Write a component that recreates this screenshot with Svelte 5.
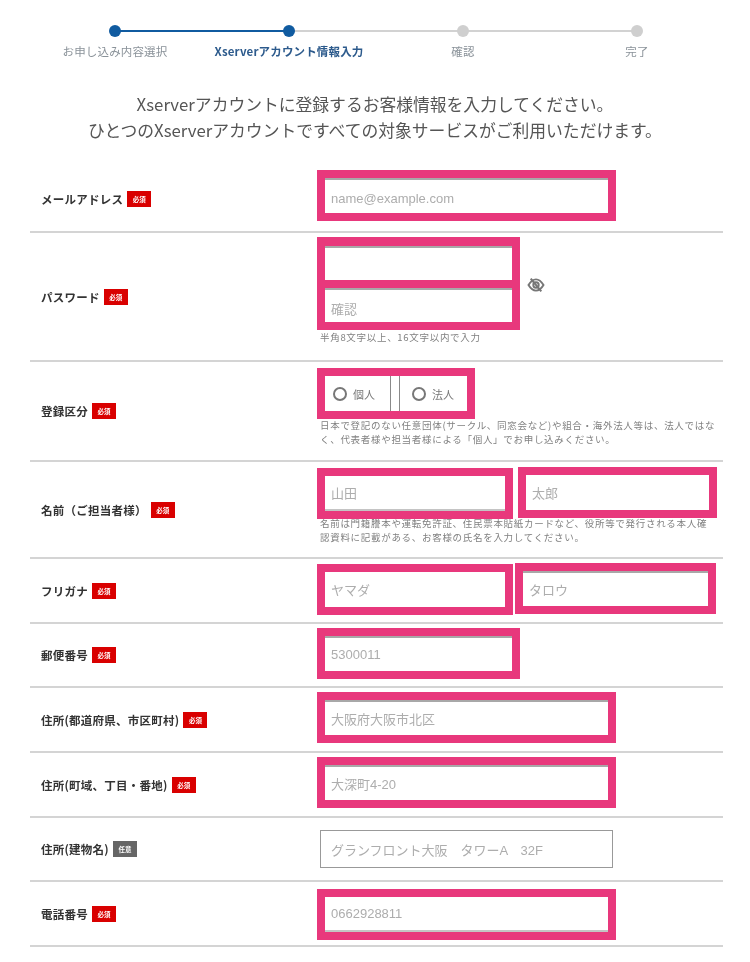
<script>
  const steps = [
    { label: 'お申し込み内容選択', state: 'done' },
    { label: 'Xserverアカウント情報入力', state: 'current' },
    { label: '確認', state: 'todo' },
    { label: '完了', state: 'todo' }
  ];
</script>

<main class="page">
  <ol class="steps">
    {#each steps as s}
      <li class="step {s.state}"><span class="dot"></span><span class="step-label">{s.label}</span></li>
    {/each}
  </ol>

  <div class="lead">
    <p>Xserverアカウントに登録するお客様情報を入力してください。</p>
    <p>ひとつのXserverアカウントですべての対象サービスがご利用いただけます。</p>
  </div>

  <form class="form">
    <div class="row r1">
      <div class="label">メールアドレス<span class="badge">必須</span></div>
      <div class="field">
        <div class="mark w299"><div class="input line">name@example.com</div></div>
      </div>
    </div>

    <div class="row r2">
      <div class="label">パスワード<span class="badge">必須</span></div>
      <div class="field">
        <div class="pw">
          <div class="pw-stack">
            <div class="mark stack-a w203"><div class="input line"></div></div>
            <div class="mark stack-b w203"><div class="input line">確認</div></div>
          </div>
          <svg class="eye" viewBox="0 0 24 24" width="18" height="18" aria-hidden="true">
            <path d="M2 12c3-5 6.200-7.500 10-7.500S19 7 22 12c-3 5-6.200 7.500-10 7.500S5 17 2 12z" fill="none" stroke="#777" stroke-width="2.600"/>
            <circle cx="12" cy="12" r="3.600" fill="none" stroke="#777" stroke-width="2.600"/>
            <path d="M5 3.500 19 20.500" stroke="#777" stroke-width="2.800"/>
          </svg>
        </div>
        <p class="hint one">半角8文字以上、16文字以内で入力</p>
      </div>
    </div>

    <div class="row r3">
      <div class="label">登録区分<span class="badge">必須</span></div>
      <div class="field">
        <div class="mark w158 radios">
          <span class="radio"><i></i>個人</span>
          <span class="radio second"><i></i>法人</span>
        </div>
        <p class="hint two">日本で登記のない任意団体(サークル、同窓会など)や組合・海外法人等は、法人ではなく、代表者様や担当者様による「個人」でお申し込みください。</p>
      </div>
    </div>

    <div class="row r4">
      <div class="label">名前（ご担当者様）<span class="badge">必須</span></div>
      <div class="field">
        <div class="pair">
          <div class="mark w196"><div class="input bottom">山田</div></div>
          <div class="mark w199 up"><div class="input">太郎</div></div>
        </div>
        <p class="hint two tight">名前は門籍謄本や運転免許証、住民票本貼紙カードなど、役所等で発行される本人確認資料に記載がある、お客様の氏名を入力してください。</p>
      </div>
    </div>

    <div class="row r5">
      <div class="label">フリガナ<span class="badge">必須</span></div>
      <div class="field">
        <div class="pair near">
          <div class="mark w196"><div class="input">ヤマダ</div></div>
          <div class="mark w201 up"><div class="input line">タロウ</div></div>
        </div>
      </div>
    </div>

    <div class="row r6">
      <div class="label">郵便番号<span class="badge">必須</span></div>
      <div class="field"><div class="mark w203"><div class="input line">5300011</div></div></div>
    </div>

    <div class="row r7">
      <div class="label">住所(都道府県、市区町村)<span class="badge">必須</span></div>
      <div class="field"><div class="mark w299"><div class="input line">大阪府大阪市北区</div></div></div>
    </div>

    <div class="row r8">
      <div class="label">住所(町域、丁目・番地)<span class="badge">必須</span></div>
      <div class="field"><div class="mark w299"><div class="input line">大深町4-20</div></div></div>
    </div>

    <div class="row r9">
      <div class="label">住所(建物名)<span class="badge optional">任意</span></div>
      <div class="field"><div class="plain">グランフロント大阪　タワーA　32F</div></div>
    </div>

    <div class="row r10">
      <div class="label">電話番号<span class="badge">必須</span></div>
      <div class="field"><div class="mark w299"><div class="input bottom">0662928811</div></div></div>
    </div>
  </form>
</main>

<style>
  :global(body) {
    margin: 0;
    background: #fff;
  }
  .page {
    width: 750px;
    height: 962px;
    overflow: hidden;
    font-family: "Noto Sans CJK JP", "Noto Sans", sans-serif;
    color: #444;
    filter: blur(0.35px);
  }
  .steps {
    list-style: none;
    margin: 0;
    padding: 25px 0 0 28px;
    display: grid;
    grid-template-columns: repeat(4, 174px);
  }
  .step {
    position: relative;
    display: flex;
    flex-direction: column;
    align-items: center;
    gap: 7px;
  }
  .dot {
    position: relative;
    z-index: 1;
    width: 12px;
    height: 12px;
    border-radius: 50%;
    background: #cfcfcf;
  }
  .step::after {
    content: "";
    position: absolute;
    left: 50%;
    top: 5px;
    width: 174px;
    height: 2px;
    background: #d2d2d2;
  }
  .step:last-child::after {
    display: none;
  }
  .step.done::after {
    background: #105ba0;
  }
  .done .dot,
  .current .dot {
    background: #105ba0;
  }
  .step-label {
    font-size: 11.500px;
    letter-spacing: 0.150px;
    line-height: 14px;
    white-space: nowrap;
    color: #8a9299;
  }
  .current .step-label {
    font-weight: 700;
    color: #2c5a8c;
  }
  .lead {
    margin-top: 33px;
    text-align: center;
    font-size: 16.800px;
    color: #555;
  }
  .lead p {
    margin: 0;
    line-height: 26px;
    white-space: nowrap;
  }
  .form {
    margin: 23px 27px 0 30px;
  }
  .row {
    display: grid;
    grid-template-columns: 287px 1fr;
    align-items: center;
    border-bottom: 2px solid #d4d4d4;
    box-sizing: border-box;
  }
  .field {
    align-self: start;
    margin-top: 4px;
  }
  .r1 { height: 67px; }
  .r2 { height: 129px; }
  .r3 { height: 100px; }
  .r4 { height: 97px; }
  .r5 { height: 65px; }
  .r6 { height: 64px; }
  .r7 { height: 65px; }
  .r8 { height: 65px; }
  .r9 { height: 64px; }
  .r10 { height: 65px; }
  .r3 .field,
  .r4 .field { margin-top: 6px; }
  .r5 .field { margin-top: 5px; }
  .r9 .field { margin-top: 12px; }
  .r10 .field { margin-top: 7px; }
  .r1 .input,
  .r2 .input { padding-top: 4px; }
  .label {
    padding-left: 11px;
    font-size: 11.500px;
    font-weight: 700;
    letter-spacing: 0.250px;
    color: #333;
    white-space: nowrap;
    display: flex;
    align-items: center;
  }
  .badge {
    margin-left: 4px;
    width: 24px;
    height: 16px;
    display: inline-flex;
    align-items: center;
    justify-content: center;
    background: #d90000;
    color: #fff;
    font-size: 6.500px;
    font-weight: 700;
    letter-spacing: 0;
  }
  .badge.optional {
    background: #666;
  }
  .mark {
    box-sizing: border-box;
    height: 51px;
    border: 8px solid #e8387c;
    background: #fff;
  }
  .w158 { width: 158px; }
  .w196 { width: 196px; }
  .w199 { width: 199px; }
  .w201 { width: 201px; }
  .w203 { width: 203px; }
  .w299 { width: 299px; }
  .input {
    box-sizing: border-box;
    height: 100%;
    display: flex;
    align-items: center;
    padding-left: 6px;
    font-family: "Liberation Sans", "Noto Sans CJK JP", sans-serif;
    font-size: 13px;
    color: #adadad;
    white-space: nowrap;
  }
  .line {
    border-top: 2px solid #a8a8a8;
  }
  .bottom {
    border-bottom: 2px solid #c4c4c4;
  }
  .pw {
    display: flex;
    align-items: flex-start;
  }
  .stack-a {
    height: 51px;
    border-top-width: 9px;
  }
  .stack-b {
    height: 50px;
    margin-top: -8px;
  }
  .eye {
    margin: 39px 0 0 7px;
  }
  .hint {
    margin: 0;
    padding-left: 3px;
    font-size: 9.500px;
    line-height: 13.500px;
    letter-spacing: 0.700px;
    color: #808080;
  }
  .hint.one {
    margin-top: 1px;
  }
  .hint.two {
    width: 396px;
    margin-top: 0;
  }
  .hint.two.tight {
    margin-top: -2px;
  }
  .radios {
    display: flex;
  }
  .radio {
    display: flex;
    align-items: center;
    gap: 6px;
    font-size: 11px;
    color: #777;
  }
  .radio:not(.second) {
    width: 66px;
    flex: none;
    box-sizing: border-box;
    padding-left: 8px;
    border-right: 1px solid #8a8a8a;
  }
  .radio.second {
    flex: 1;
    border-left: 1px solid #8a8a8a;
    margin-left: 8px;
    padding-left: 12px;
  }
  .radio i {
    box-sizing: border-box;
    width: 14px;
    height: 14px;
    border: 2px solid #777;
    border-radius: 50%;
    flex: none;
  }
  .pair {
    display: flex;
    gap: 5px;
    align-items: flex-start;
  }
  .pair.near {
    gap: 2px;
  }
  .up {
    margin-top: -1px;
  }
  .plain {
    box-sizing: border-box;
    width: 293px;
    height: 38px;
    margin-left: 3px;
    border: 1px solid #999;
    display: flex;
    align-items: center;
    padding-left: 10px;
    font-family: "Liberation Sans", "Noto Sans CJK JP", sans-serif;
    font-size: 13px;
    color: #adadad;
    white-space: nowrap;
  }
</style>
